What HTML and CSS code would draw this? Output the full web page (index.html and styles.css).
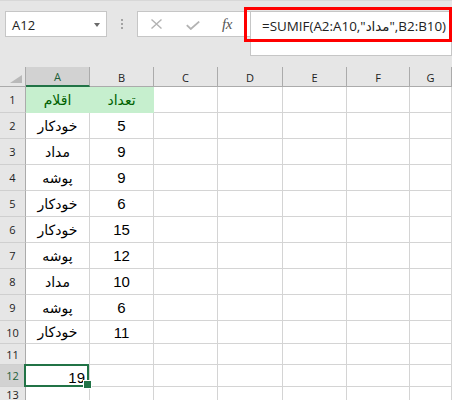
FILE: index.html
```html
<!DOCTYPE html>
<html lang="fa">
<head>
<meta charset="utf-8">
<title>SUMIF</title>
<link rel="stylesheet" href="styles.css">
</head>
<body>
<div class="toolbar">
  <div class="namebox"><span class="ref">A12</span><span class="caret"></span></div>
  <div class="grip"><i></i><i></i><i></i></div>
  <div class="fxbox">
    <svg class="ic-x" width="11" height="10" viewBox="0 0 11 10"><path d="M0.5 0.5 L10.5 9.5 M10.5 0.5 L0.5 9.5" stroke="#b3b3b3" stroke-width="1.4" fill="none"/></svg>
    <svg class="ic-ok" width="14" height="9" viewBox="0 0 14 9"><path d="M0.8 4.2 L4.8 8 L13.2 0.6" stroke="#b3b3b3" stroke-width="1.8" fill="none"/></svg>
    <span class="fx">fx</span>
  </div>
  <div class="formula"><span>=SUMIF(A2:A10,"مداد",B2:B10)</span></div>
  <div class="highlight"></div>
</div>
<div class="sheet">
  <div class="c corner"><svg width="12" height="8" viewBox="0 0 12 8"><path d="M12 0 L12 8 L0 8 Z" fill="#b9b9b9"/></svg></div>
  <div class="c ch sel">A</div><div class="c ch">B</div><div class="c ch">C</div><div class="c ch">D</div><div class="c ch">E</div><div class="c ch">F</div><div class="c ch">G</div>

  <div class="c rh">1</div><div class="c g ar">اقلام</div><div class="c g ar">تعداد</div><div class="c"></div><div class="c"></div><div class="c"></div><div class="c"></div><div class="c"></div>
  <div class="c rh">2</div><div class="c ar">خودکار</div><div class="c">5</div><div class="c"></div><div class="c"></div><div class="c"></div><div class="c"></div><div class="c"></div>
  <div class="c rh">3</div><div class="c ar">مداد</div><div class="c">9</div><div class="c"></div><div class="c"></div><div class="c"></div><div class="c"></div><div class="c"></div>
  <div class="c rh">4</div><div class="c ar">پوشه</div><div class="c">9</div><div class="c"></div><div class="c"></div><div class="c"></div><div class="c"></div><div class="c"></div>
  <div class="c rh">5</div><div class="c ar">خودکار</div><div class="c">6</div><div class="c"></div><div class="c"></div><div class="c"></div><div class="c"></div><div class="c"></div>
  <div class="c rh">6</div><div class="c ar">خودکار</div><div class="c">15</div><div class="c"></div><div class="c"></div><div class="c"></div><div class="c"></div><div class="c"></div>
  <div class="c rh">7</div><div class="c ar">پوشه</div><div class="c">12</div><div class="c"></div><div class="c"></div><div class="c"></div><div class="c"></div><div class="c"></div>
  <div class="c rh">8</div><div class="c ar">مداد</div><div class="c">10</div><div class="c"></div><div class="c"></div><div class="c"></div><div class="c"></div><div class="c"></div>
  <div class="c rh">9</div><div class="c ar">پوشه</div><div class="c">6</div><div class="c"></div><div class="c"></div><div class="c"></div><div class="c"></div><div class="c"></div>
  <div class="c rh">10</div><div class="c ar">خودکار</div><div class="c">11</div><div class="c"></div><div class="c"></div><div class="c"></div><div class="c"></div><div class="c"></div>
  <div class="c rh">11</div><div class="c"></div><div class="c"></div><div class="c"></div><div class="c"></div><div class="c"></div><div class="c"></div><div class="c"></div>
  <div class="c rh sel">12</div><div class="c active">19</div><div class="c"></div><div class="c"></div><div class="c"></div><div class="c"></div><div class="c"></div><div class="c"></div>
  <div class="c rh">13</div><div class="c"></div><div class="c"></div><div class="c"></div><div class="c"></div><div class="c"></div><div class="c"></div><div class="c"></div>
</div>
</body>
</html>
```
FILE: styles.css
```css
* { box-sizing: border-box; }

html, body {
  margin: 0;
  padding: 0;
}

body {
  width: 452px;
  height: 400px;
  overflow: hidden;
  background: #e6e6e6;
  font-family: "Liberation Sans", "DejaVu Sans", sans-serif;
}

.toolbar {
  position: relative;
  height: 67px;
  display: flex;
  align-items: flex-start;
  padding: 11px 0 0 5px;
  background: #e6e6e6;
  border-top: 1px solid #d8d8d8;
}

.namebox {
  width: 102px;
  height: 26px;
  margin-top: -1px;
  background: #fff;
  border: 1px solid #c6c6c6;
  display: flex;
  align-items: center;
  padding: 1px 6px 0 6px;
  font: 13px "Open Sans", sans-serif;
  color: #222;
}

.caret {
  margin-left: auto;
  width: 0;
  height: 0;
  border-left: 3.5px solid transparent;
  border-right: 3.5px solid transparent;
  border-top: 4px solid #6a6a6a;
}

.grip {
  width: 30px;
  display: flex;
  flex-direction: column;
  align-items: center;
  gap: 2px;
  padding-top: 7px;
}

.grip i {
  display: block;
  width: 2px;
  height: 2px;
  background: #a3a3a3;
}

.fxbox {
  width: 113px;
  height: 26px;
  margin-top: -1px;
  background: #fff;
  border: 1px solid #c6c6c6;
  border-right: none;
  display: flex;
  align-items: center;
  padding-left: 13px;
}

.ic-ok { margin-left: 24px; margin-top: 2px; }

.fx {
  margin-left: 22px;
  font: italic 15px "Liberation Serif", serif;
  color: #555;
  letter-spacing: -0.5px;
}

.formula {
  width: 202px;
  height: 45px;
  margin-top: -1px;
  background: #fff;
  border: 1px solid #c6c6c6;
  padding: 4px 0 0 11px;
  font: 13.4px "Open Sans", "DejaVu Sans", sans-serif;
  line-height: 20px;
  color: #222;
  white-space: nowrap;
}

.highlight {
  position: absolute;
  left: 244px;
  top: 6px;
  width: 208px;
  height: 35px;
  border: 3px solid #ff0000;
}

.sheet {
  display: grid;
  grid-template-columns: 26px 64px 64px 64px 65px 64px 63px 1fr;
  grid-template-rows: 20px repeat(9, 26px) 23px 21px 22px 1fr;
  height: 333px;
  background: #fff;
}

.c {
  border-right: 1px solid #d4d4d4;
  border-bottom: 1px solid #d4d4d4;
  display: flex;
  align-items: center;
  justify-content: center;
  font-size: 15px;
  color: #000;
  background: #fff;
  white-space: nowrap;
}

.ar {
  font-family: "DejaVu Sans", sans-serif;
  font-size: 14px;
}

.corner {
  background: #e6e6e6;
  border-right-color: #ababab;
  border-bottom-color: #ababab;
  justify-content: flex-end;
  align-items: flex-end;
  padding: 0 3px 3px 0;
}

.corner svg { display: block; }

.ch {
  background: #e6e6e6;
  border-right-color: #ababab;
  border-bottom-color: #ababab;
  font: 11px "Open Sans", sans-serif;
  color: #222;
  padding-top: 1px;
}

.ch.sel {
  background: #d2d2d2;
  border-bottom: 2px solid #217346;
  color: #1d5f39;
}

.rh {
  background: #e6e6e6;
  border-right-color: #ababab;
  border-bottom-color: #cfcfcf;
  font: 11px "Open Sans", sans-serif;
  color: #222;
}

.rh.sel {
  background: #d2d2d2;
  color: #1d5f39;
}

.g {
  background: #c6efce;
  color: #006100;
  border-right-color: #c6efce;
  border-bottom-color: #c6efce;
}

.active {
  position: relative;
  justify-content: flex-end;
  padding: 3px 4px 0 0;
}

.active::before {
  content: "";
  position: absolute;
  left: -2px;
  top: -1px;
  right: 0;
  bottom: -1px;
  border: 2px solid #217346;
}

.active::after {
  content: "";
  position: absolute;
  right: -3px;
  bottom: -3px;
  width: 7px;
  height: 7px;
  background: #217346;
  border: 1px solid #fff;
}
```
